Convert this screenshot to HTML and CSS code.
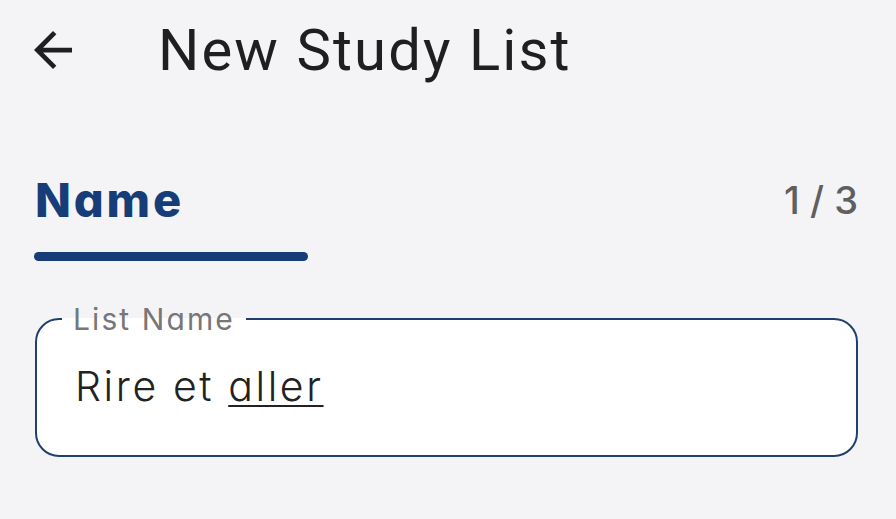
FILE: index.html
```html
<!DOCTYPE html>
<html lang="en">
<head>
<meta charset="utf-8">
<title>New Study List</title>
<link rel="stylesheet" href="styles.css">
</head>
<body>
<div class="screen">
  <header class="topbar">
    <svg class="back" viewBox="4 4 16 16" width="38" height="38" aria-hidden="true">
      <path d="M20 11H7.83l5.59-5.59L12 4l-8 8 8 8 1.41-1.41L7.83 13H20v-2z" fill="#1f1f1f"/>
    </svg>
    <h1 class="title">New Study List</h1>
  </header>

  <section class="step">
    <div class="step-row">
      <h2 class="step-name">Name</h2>
      <span class="step-count">1 / 3</span>
    </div>
    <div class="step-bar"></div>
  </section>

  <fieldset class="field">
    <legend class="field-label">List Name</legend>
    <div class="field-value">Rire et <span class="typed">aller</span></div>
  </fieldset>
</div>
</body>
</html>
```

FILE: styles.css
```css
html, body {
  margin: 0;
  padding: 0;
  background: #f4f4f7;
}

.screen {
  width: 896px;
  height: 519px;
  box-sizing: border-box;
  padding: 0 38px 0 35px;
  font-family: Inter, "Noto Sans", sans-serif;
  font-feature-settings: "cv11";
  color: #1f1f1f;
}

.topbar {
  display: flex;
  align-items: center;
  height: 100px;
  margin-left: -1px;
}

.back {
  display: block;
  flex: none;
}

.title {
  margin: 0 0 0 86px;
  font-family: Roboto, "Noto Sans", sans-serif;
  font-weight: 400;
  font-size: 58px;
  line-height: 1;
  letter-spacing: 2.1px;
  color: #1f1f1f;
}

.step {
  margin-top: 76px;
}

.step-row {
  display: flex;
  justify-content: space-between;
  align-items: center;
}

.step-name {
  margin: 0;
  font-size: 47px;
  font-weight: 800;
  line-height: 1;
  letter-spacing: 2.8px;
  color: #163d78;
}

.step-count {
  font-size: 38px;
  font-weight: 500;
  line-height: 1;
  color: #5f5f5f;
  letter-spacing: 0;
}

.step-bar {
  width: 274px;
  height: 9px;
  margin-top: 29px;
  margin-left: -1px;
  border-radius: 5px;
  background: #163d78;
}

.field {
  margin: 43px 0 0 0;
  padding: 0 0 48px 25px;
  border: 2px solid #1f3f6e;
  border-radius: 24px;
  background: #ffffff;
  min-width: 0;
}

.field-label {
  padding: 0 11px;
  font-size: 30px;
  font-weight: 400;
  line-height: 1;
  letter-spacing: 2.1px;
  color: #777777;
}

.field-value {
  margin-top: 32px;
  padding-left: 13px;
  font-size: 41px;
  font-weight: 300;
  line-height: 1;
  letter-spacing: 2.6px;
  color: #222222;
}

.typed {
  text-decoration: underline;
  text-decoration-thickness: 2px;
  text-underline-offset: 4px;
}
```
